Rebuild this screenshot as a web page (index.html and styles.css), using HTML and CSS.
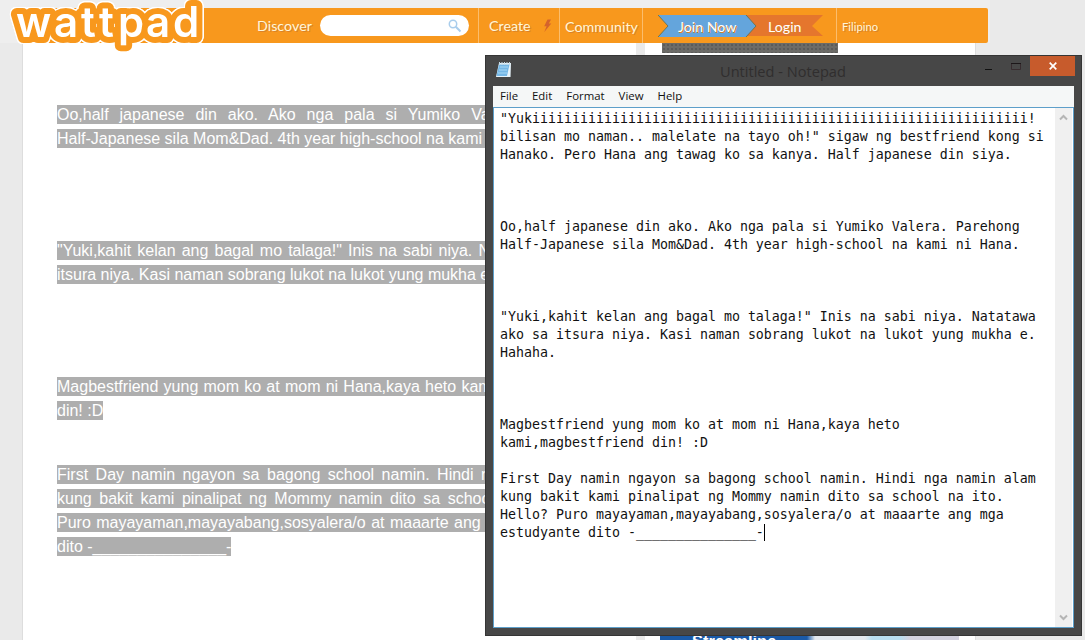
FILE: index.html
```
<!DOCTYPE html>
<html lang="tl">
<head>
<meta charset="utf-8">
<title>Wattpad</title>
<link rel="stylesheet" href="styles.css">
</head>
<body>
<header class="topbar">
  <svg class="logo" width="210" height="56" viewBox="0 0 210 56">
    <text class="logo-text" x="16 54 81 99 118 146 173" y="37">wattpad</text>
  </svg>
  <nav class="nav">
    <a class="discover">Discover</a>
    <div class="search">
      <svg width="14" height="14" viewBox="0 0 14 14"><circle cx="5" cy="5" r="3.7" fill="none" stroke="#a9cdec" stroke-width="1.5"/><path d="M7.8 7.8L12.5 12.5" stroke="#a9cdec" stroke-width="2"/></svg>
    </div>
    <a class="cell create">Create
      <svg width="9" height="14" viewBox="0 0 9 14"><path d="M4.5 .5H8L5.8 4.5H8.3L1.3 13L3.6 7.3H1.2Z" fill="#d4632c"/></svg>
    </a>
    <a class="cell community">Community</a>
    <div class="cell account">
      <svg class="ribbons" width="166" height="24" viewBox="0 0 166 24">
        <path d="M88 1H165L154 12L165 22H88Z" fill="#e5762d"/>
        <path d="M0 1H88L98 12L88 23H0L10 12Z" fill="#64a5dc"/>
        <path d="M0 1L10 12L0 23M88 1L98 12L88 23" fill="none" stroke="#6f7654" stroke-width="1"/>
        <text x="20" y="18">Join Now</text>
        <text x="110" y="18">Login</text>
      </svg>
    </div>
    <a class="cell language">Filipino</a>
  </nav>
</header>
<div class="page">
  <main class="story">
    <p><span>Oo,half japanese din ako. Ako nga pala si Yumiko Valera. Parehong <b class="keep">Half-Japanese</b> sila Mom&amp;Dad. 4th year high-school na kami ni Hana.</span></p>
    <p class="far"><span>"Yuki,kahit kelan ang bagal mo talaga!" Inis na sabi niya. Natatawa ako sa itsura niya. Kasi naman sobrang lukot na lukot yung mukha e. Hahaha.</span></p>
    <p class="far"><span>Magbestfriend yung mom ko at mom ni Hana,kaya heto kami,magbestfriend din! :D</span></p>
    <p class="near"><span>First Day namin ngayon sa bagong school namin. Hindi nga namin alam kung bakit kami pinalipat ng Mommy namin dito sa school na ito. Hello? Puro mayayaman,mayayabang,sosyalera/o at maaarte ang mga estudyante dito -<b class="keep blank">_______________</b>-</span></p>
  </main>
  <aside class="side">
    <div class="ad-top"></div>
    <div class="ad-bottom"><span>Streamline</span></div>
  </aside>
</div>
<section class="window">
  <div class="titlebar">
    <svg class="note" width="18" height="18" viewBox="0 0 18 18"><path d="M4 2H16L15.500 16H1Z" fill="#e8f4fb"/><path d="M4 3.500H14.500L12 15H1.500Z" fill="#75b7e6"/><path d="M5 6H13M4 9H12M3 12H12" stroke="#a9d9f5"/><path d="M4.500 1V4M7 1V4M9.500 1V4M12 1V4M14.500 1V4" stroke="#c7dce8"/></svg>
    <h1 class="title">Untitled - Notepad</h1>
    <div class="controls">
      <svg width="9" height="20" viewBox="0 0 9 20"><path d="M1 13.500H8" stroke="#111" stroke-width="1"/></svg>
      <svg width="12" height="20" viewBox="0 0 12 20"><path d="M1.500 13.500V7.500H10.500V13.500Z" fill="none" stroke="#382c2f"/><path d="M1 7.500H11" stroke="#1c1719" stroke-width="1"/></svg>
      <div class="close"><svg width="8" height="8" viewBox="0 0 8 8"><path d="M.7.7L7.300 7.300M7.300.7L.7 7.300" stroke="#fff" stroke-width="1.700"/></svg></div>
    </div>
  </div>
  <div class="client">
    <nav class="menu"><a>File</a><a>Edit</a><a>Format</a><a>View</a><a>Help</a></nav>
    <div class="editor">
      <pre class="text">"Yukiiiiiiiiiiiiiiiiiiiiiiiiiiiiiiiiiiiiiiiiiiiiiiiiiiiiiiiiiiiiii!
bilisan mo naman.. malelate na tayo oh!" sigaw ng bestfriend kong si
Hanako. Pero Hana ang tawag ko sa kanya. Half japanese din siya.



Oo,half japanese din ako. Ako nga pala si Yumiko Valera. Parehong
Half-Japanese sila Mom&amp;Dad. 4th year high-school na kami ni Hana.



"Yuki,kahit kelan ang bagal mo talaga!" Inis na sabi niya. Natatawa
ako sa itsura niya. Kasi naman sobrang lukot na lukot yung mukha e.
Hahaha.



Magbestfriend yung mom ko at mom ni Hana,kaya heto
kami,magbestfriend din! :D

First Day namin ngayon sa bagong school namin. Hindi nga namin alam
kung bakit kami pinalipat ng Mommy namin dito sa school na ito.
Hello? Puro mayayaman,mayayabang,sosyalera/o at maaarte ang mga
estudyante dito -_______________-<span class="caret"></span></pre>
      <div class="scroll">
        <svg width="9" height="7" viewBox="0 0 9 7"><path d="M1 5.500L4.500 2L8 5.500" fill="none" stroke="#b5b5b5" stroke-width="2"/></svg>
        <svg width="9" height="7" viewBox="0 0 9 7"><path d="M1 1.500L4.500 5L8 1.500" fill="none" stroke="#b5b5b5" stroke-width="2"/></svg>
      </div>
    </div>
  </div>
</section>
</body>
</html>
```
FILE: styles.css
```
* { box-sizing: border-box; }
body {
  margin: 0;
  width: 1085px;
  height: 640px;
  overflow: hidden;
  position: relative;
  background: linear-gradient(90deg, #eee 0 990px, #eaeaea 990px);
  font-family: "Liberation Sans", Arial, sans-serif;
}
.topbar { height: 43px; padding-top: 8px; position: relative; z-index: 1; }
.logo { position: absolute; left: 0; top: 0; overflow: visible; }
.logo-text {
  font: 600 42px Inter, sans-serif;
  fill: #fff;
  stroke: #f8981d;
  stroke-width: 12px;
  stroke-linejoin: round;
  paint-order: stroke;
  filter: drop-shadow(1px 0 0 #fff) drop-shadow(-1px 0 0 #fff) drop-shadow(0 1px 0 #fff) drop-shadow(0 -1px 0 #fff) drop-shadow(.5px .5px 0 #fff);
}
.nav {
  width: 968px;
  height: 35px;
  margin-left: 20px;
  padding-left: 237px;
  border-radius: 2px;
  background: #f8981d;
  display: flex;
  align-items: center;
  font: 14.300px/37px Lato, sans-serif;
  color: #fff6d8;
}
.discover { width: 63px; text-shadow: 1px 1px 0 #d9822a; }
.search {
  width: 149px;
  height: 21px;
  margin-right: 9px;
  padding-right: 7px;
  border-radius: 11px;
  background: #fff;
  display: flex;
  align-items: center;
  justify-content: flex-end;
}
.cell { height: 35px; border-left: 1px solid #fbbd6c; text-shadow: 1px 1px 0 #d9822a; }
.create { width: 81px; padding: 0 7px 0 10px; display: flex; align-items: center; justify-content: space-between; }
.community { width: 83px; padding-left: 5px; }
.account { width: 194px; padding: 6px 0 0 15px; line-height: 0; }
.ribbons text { font: 14.200px Lato, sans-serif; fill: #fff; }
.language { padding-left: 5px; font-size: 11.300px; }
.page { height: 597px; padding-left: 22px; display: flex; background: #eaeaea; }
.story {
  width: 614px;
  height: 597px;
  padding: 60px 35px 0 34px;
  background: #fff;
  border-left: 1px solid #ddd;
}
.story p { margin: 0; font-size: 16px; line-height: 24px; color: #fff; text-align: justify; }
.story span { background: #aeaeae; padding: 1px 0; }
.story .far { margin-top: 88px; }
.story .near { margin-top: 40px; }
.keep { font-weight: 400; white-space: nowrap; }
.blank { box-shadow: inset 0 -1px 0 #fff; }
.side {
  width: 331px;
  margin-left: 9px;
  padding: 0 16px 0 15px;
  background: #fff;
  border-right: 1px solid #ddd;
  display: flex;
  flex-direction: column;
  justify-content: space-between;
}
.ad-top { width: 176px; height: 10px; margin-left: 2px; background: radial-gradient(#555 20%, #6c6b67 40%) 0 0 / 4px 4px; }
.ad-bottom {
  height: 4px;
  overflow: hidden;
  padding-left: 32px;
  background: linear-gradient(90deg, #1a5aa8 0 147px, #e4e9ef 155px 205px, #b9def0 212px 240px, #d3d2df 250px);
  font-weight: 700;
  font-size: 16.500px;
  line-height: 10px;
  color: #fff;
}
.window {
  position: absolute;
  left: 485px;
  top: 55px;
  width: 597px;
  height: 581px;
  z-index: 2;
  padding: 0 8px 8px;
  background: #474747;
  border: 1px solid #353535;
}
.titlebar { height: 30px; display: flex; position: relative; }
.note { margin: 5px 0 0 1px; }
.title {
  flex: 1;
  margin: 0;
  padding-left: 207px;
  font: 14.600px/30px "Open Sans", sans-serif;
  color: #302e2e;
}
.controls { display: flex; gap: 17px; margin-right: -2px; }
.close {
  width: 45px;
  height: 20px;
  background: #c75b2c;
  display: flex;
  align-items: center;
  justify-content: center;
  margin-left: -9px;
}
.client { height: 542px; background: #fff; display: flex; flex-direction: column; width: 581px; margin-left: -1px; }
.menu {
  height: 21px;
  padding-left: 7px;
  display: flex;
  gap: 14px;
  background: #f5f7f7;
  font: 11.400px/20px "Open Sans", sans-serif;
  color: #111;
}
.editor { flex: 1; border: 1px solid #5d9fca; display: flex; justify-content: space-between; }
.text {
  margin: 0;
  padding: 2px 0 0 6px;
  font: 13.290px/18px "DejaVu Sans Mono", monospace;
  color: #111;
}
.caret { display: inline-block; width: 1px; height: 17px; background: #000; vertical-align: -4px; }
.scroll {
  width: 18px;
  padding: 6px 0;
  background: #f0f0f0;
  border-right: 1px solid #fff;
  display: flex;
  flex-direction: column;
  align-items: center;
  justify-content: space-between;
}
```
